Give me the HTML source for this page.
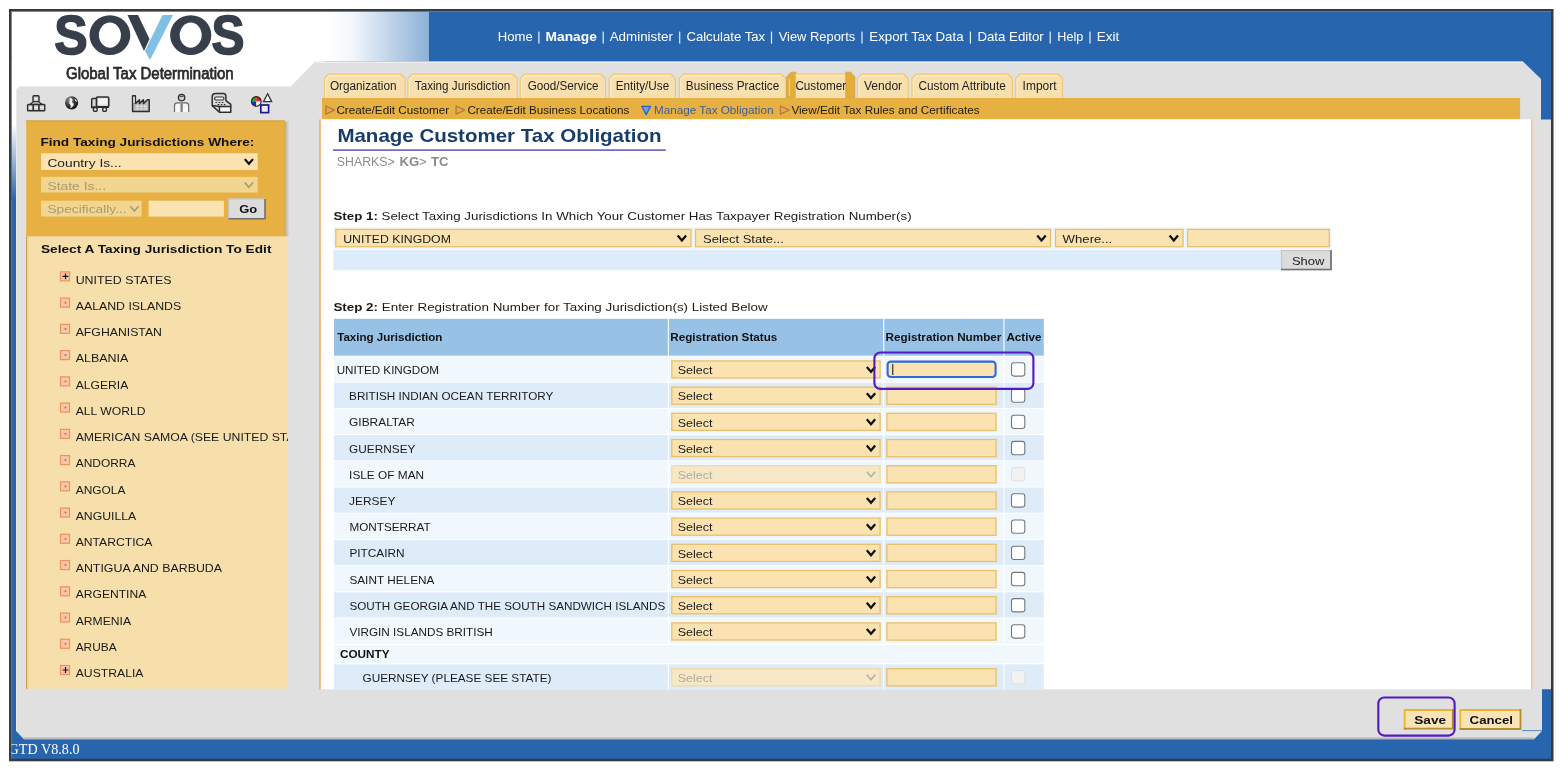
<!DOCTYPE html>
<html><head><meta charset="utf-8"><title>GTD</title><style>html,body{margin:0;padding:0;background:#fff;width:1562px;height:770px;overflow:hidden}svg{display:block;will-change:transform}</style></head><body><svg width="1562" height="770" viewBox="0 0 1562 770"><rect x="0.00" y="0.00" width="1562.00" height="770.00" fill="#ffffff" />
<rect x="11.50" y="11.50" width="1540.00" height="748.00" fill="#2766ae" />
<defs><linearGradient id="hg" x1="0" x2="1" y1="0" y2="0"><stop offset="0" stop-color="#ffffff"/><stop offset="0.25" stop-color="#f4f8fc"/><stop offset="1" stop-color="#8db1d7"/></linearGradient><linearGradient id="vg" x1="0" x2="0" y1="0" y2="1"><stop offset="0" stop-color="#ffffff"/><stop offset="0.45" stop-color="#ffffff"/><stop offset="1" stop-color="#2766ae"/></linearGradient></defs>
<rect x="11.50" y="11.50" width="313.50" height="78.50" fill="#ffffff" />
<rect x="324.00" y="11.50" width="105.00" height="50.00" fill="url(#hg)" />
<rect x="11.50" y="61.00" width="5.00" height="139.00" fill="url(#vg)" />
<path d="M16,92 Q16,86 22,86 L291,86 L315,61.5 L1523,61.5 L1541,79 L1541,119.6 L1551.5,119.6 L1551.5,689.3 L1542,689.3 L1542,731 L1534,739.3 L24,739.3 L16,731 Z" fill="#e0e0e0"/>
<path d="M16.5,731 L16.5,92 Q16.5,86.5 22,86.5 L291,86.5 L315,62" fill="none" stroke="#ececec" stroke-width="1"/>
<path d="M315,62.2 L1523,62.2" stroke="#f2f2f2" stroke-width="1"/>
<defs><linearGradient id="bsh" x1="0" x2="0" y1="0" y2="1"><stop offset="0" stop-color="#e0e0e0"/><stop offset="1" stop-color="#a8a8a8"/></linearGradient></defs>
<path d="M22,736.4 L1536.6,736.4 L1534,739.3 L24,739.3 Z" fill="url(#bsh)"/>
<path d="M1522,730.6 L1542,730.6" stroke="#5a8cc8" stroke-width="1"/>
<rect x="10.25" y="10.25" width="1542" height="749.8" fill="none" stroke="#363b40" stroke-width="2.5"/>
<text x="54.2" y="54.4" font-size="55" font-weight="bold" fill="#363f4a" stroke="#363f4a" stroke-width="1.6" font-family='"Liberation Sans", sans-serif' textLength="33.4" lengthAdjust="spacingAndGlyphs">S</text>
<text x="211.4" y="54.4" font-size="55" font-weight="bold" fill="#363f4a" stroke="#363f4a" stroke-width="1.6" font-family='"Liberation Sans", sans-serif' textLength="33" lengthAdjust="spacingAndGlyphs">S</text>
<path fill-rule="evenodd" fill="#363f4a" d="M89.5,35.1 a20.4,19.9 0 1 0 40.8,0 a20.4,19.9 0 1 0 -40.8,0 Z M98.9,35.1 a11.0,12.6 0 1 0 22.0,0 a11.0,12.6 0 1 0 -22.0,0 Z"/>
<path fill-rule="evenodd" fill="#363f4a" d="M170.1,35.1 a20.6,19.9 0 1 0 41.2,0 a20.6,19.9 0 1 0 -41.2,0 Z M179.7,35.1 a11.0,12.6 0 1 0 22.0,0 a11.0,12.6 0 1 0 -22.0,0 Z"/>
<path d="M127.5,15 L138,15 L149.5,39 L144,51 Z" fill="#363f4a"/>
<path d="M162.5,15 L173,15 L150,60 L145,51 Z" fill="#7fc1e3"/>
<text x="66.00" y="78.60" font-size="16.4" font-weight="normal" fill="#2a2a2a" font-family='"Liberation Sans", sans-serif' textLength="167.60" lengthAdjust="spacingAndGlyphs" stroke="#2a2a2a" stroke-width="0.75" xml:space="preserve">Global Tax Determination</text>
<text x="497.70" y="41.10" font-size="12.4" font-weight="normal" fill="#ffffff" font-family='"Liberation Sans", sans-serif' textLength="35.00" lengthAdjust="spacingAndGlyphs"  xml:space="preserve">Home</text>
<text x="545.60" y="41.10" font-size="12.4" font-weight="bold" fill="#ffffff" font-family='"Liberation Sans", sans-serif' textLength="51.20" lengthAdjust="spacingAndGlyphs"  xml:space="preserve">Manage</text>
<text x="609.70" y="41.10" font-size="12.4" font-weight="normal" fill="#ffffff" font-family='"Liberation Sans", sans-serif' textLength="63.20" lengthAdjust="spacingAndGlyphs"  xml:space="preserve">Administer</text>
<text x="686.40" y="41.10" font-size="12.4" font-weight="normal" fill="#ffffff" font-family='"Liberation Sans", sans-serif' textLength="78.70" lengthAdjust="spacingAndGlyphs"  xml:space="preserve">Calculate Tax</text>
<text x="778.70" y="41.10" font-size="12.4" font-weight="normal" fill="#ffffff" font-family='"Liberation Sans", sans-serif' textLength="76.50" lengthAdjust="spacingAndGlyphs"  xml:space="preserve">View Reports</text>
<text x="869.30" y="41.10" font-size="12.4" font-weight="normal" fill="#ffffff" font-family='"Liberation Sans", sans-serif' textLength="94.30" lengthAdjust="spacingAndGlyphs"  xml:space="preserve">Export Tax Data</text>
<text x="977.40" y="41.10" font-size="12.4" font-weight="normal" fill="#ffffff" font-family='"Liberation Sans", sans-serif' textLength="66.40" lengthAdjust="spacingAndGlyphs"  xml:space="preserve">Data Editor</text>
<text x="1057.30" y="41.10" font-size="12.4" font-weight="normal" fill="#ffffff" font-family='"Liberation Sans", sans-serif' textLength="25.90" lengthAdjust="spacingAndGlyphs"  xml:space="preserve">Help</text>
<text x="1096.70" y="41.10" font-size="12.4" font-weight="normal" fill="#ffffff" font-family='"Liberation Sans", sans-serif' textLength="22.60" lengthAdjust="spacingAndGlyphs"  xml:space="preserve">Exit</text>
<rect x="538.30" y="31.60" width="1.20" height="12.00" fill="#e8eef6" />
<rect x="602.60" y="31.60" width="1.20" height="12.00" fill="#e8eef6" />
<rect x="679.10" y="31.60" width="1.20" height="12.00" fill="#e8eef6" />
<rect x="770.90" y="31.60" width="1.20" height="12.00" fill="#e8eef6" />
<rect x="861.40" y="31.60" width="1.20" height="12.00" fill="#e8eef6" />
<rect x="969.80" y="31.60" width="1.20" height="12.00" fill="#e8eef6" />
<rect x="1049.60" y="31.60" width="1.20" height="12.00" fill="#e8eef6" />
<rect x="1089.40" y="31.60" width="1.20" height="12.00" fill="#e8eef6" />
<g stroke="#2e2e2e" stroke-width="1.4" fill="#cfcfcf"><rect x="33" y="95.8" width="6" height="5.8" rx="0.9"/><rect x="27.6" y="104.5" width="5.8" height="6.2" rx="0.8"/><rect x="33.3" y="104.5" width="5.8" height="6.2" rx="0.8"/><rect x="39" y="104.5" width="5.8" height="6.2" rx="0.8"/></g><path d="M33.5,101.8 L29.5,104.4 M38.5,101.8 L42.5,104.4 M29.5,104.4 L42.5,104.4" stroke="#2e2e2e" stroke-width="1.1" fill="none"/><path d="M34.4,98.9 h3.2 M29,107.7 h3 M34.7,107.7 h3 M40.4,107.7 h3" stroke="#f8f8f8" stroke-width="1.3"/>
<defs><radialGradient id="glb" cx="0.35" cy="0.3" r="0.75"><stop offset="0" stop-color="#9a9a9a"/><stop offset="0.5" stop-color="#3c3c3c"/><stop offset="1" stop-color="#111"/></radialGradient></defs><circle cx="71.6" cy="102.85" r="6.6" fill="url(#glb)"/><path d="M69.2,97.6 Q72.5,98.2 72.8,100.2 Q71,101.2 72.5,102.8 Q74.5,103.6 73.6,105.6 Q72,107.6 70.4,108.6 Q71.2,106 70.2,104.6 Q68.4,103.4 69.6,101.6 Q70.6,100.2 69.2,97.6 Z" fill="#f0f0f0"/><path d="M74.6,98.6 Q76.8,100 77.4,102 Q76,101.6 75,100.2 Z" fill="#dcdcdc"/>
<g stroke="#2e2e2e" stroke-width="1.5" fill="#d6d6d6"><rect x="96.4" y="96.9" width="12.4" height="9.9" rx="1.2"/><path d="M91.7,107.6 L91.7,99.6 Q91.7,98.6 92.7,98.6 L96.4,98.6 L96.4,107.6 Z"/></g><rect x="98.2" y="98.6" width="9" height="6.2" fill="#f4f4f4"/><path d="M91.5,107.2 L109,107.2" stroke="#2e2e2e" stroke-width="1.6"/><g stroke="#2e2e2e" stroke-width="1.4" fill="#fafafa"><circle cx="95.3" cy="109.4" r="1.9"/><circle cx="104.6" cy="109.4" r="1.9"/></g>
<path d="M132.6,111.6 L132.6,95.8 L135.4,95.8 L135.4,103.6 L139.4,99.8 L139.4,103.6 L143.4,99.8 L143.4,103.6 L147.4,99.8 L149.2,99.8 L149.2,111.6 Z" fill="#bcbcbc" stroke="#2e2e2e" stroke-width="1.5" stroke-linejoin="round"/><rect x="133.4" y="96.8" width="1.3" height="6" fill="#f0f0f0"/><path d="M136.4,106.2 h2.2 M140.4,106.2 h2.2 M144.4,106.2 h2.2 M136.4,108.9 h2.2 M140.4,108.9 h2.2 M144.4,108.9 h2.2" stroke="#f4f4f4" stroke-width="1.4"/>
<circle cx="181.6" cy="97.6" r="3.2" fill="#d0d0d0" stroke="#2e2e2e" stroke-width="1.3"/><path d="M178.6,97 Q181.6,93.8 184.6,97 Z" fill="#555"/><path d="M174.5,111.9 L174.5,105.6 Q174.5,102.8 177.4,102.8 L185.8,102.8 Q188.7,102.8 188.7,105.6 L188.7,111.9" fill="#f6f6f6" stroke="#6a6a6a" stroke-width="1.2"/><rect x="180.5" y="103.4" width="2.2" height="8.5" fill="#7a7a7a"/>
<g stroke="#2e2e2e" stroke-width="1.5" fill="#dadada" stroke-linejoin="round"><path d="M212.2,97 Q212.2,93.6 215.6,93.6 L223.4,93.6 Q225.9,93.6 225.9,96.4 L225.9,100.6 L230.8,104.4 L230.8,112.3 L219.4,112.3 L212.2,105.6 Z"/><path d="M219.4,112.3 L219.4,106.6 L230.8,106.6" fill="none"/><path d="M212.2,105.6 L219.4,106.6" fill="none"/></g><rect x="220.6" y="107.8" width="9" height="3.4" fill="#fafafa"/><rect x="214.6" y="97" width="9.4" height="3" rx="1.5" fill="#f4f4f4" stroke="#2e2e2e" stroke-width="1.1"/><path d="M215.5,102.5 h1.6 M218.6,102.5 h1.6 M221.7,102.5 h1.6 M217.6,104.6 h1.6 M220.7,104.6 h1.6 M223.8,104.6 h1.6" stroke="#333" stroke-width="1.1"/>
<g><path d="M256.3,101.4 L256.3,96.60000000000001 A4.8,4.8 0 0 0 251.5,101.4 Z" fill="#1fa82a"/><path d="M256.3,101.4 L256.3,96.60000000000001 A4.8,4.8 0 0 1 261.1,101.4 Z" fill="#e02020"/><path d="M256.3,101.4 L251.5,101.4 A4.8,4.8 0 0 0 256.3,106.2 Z" fill="#1a2ad0"/><path d="M256.3,101.4 L261.1,101.4 A4.8,4.8 0 0 1 256.3,106.2 Z" fill="#f4f4f4"/><circle cx="256.3" cy="101.4" r="4.8" fill="none" stroke="#222" stroke-width="1.1"/><path d="M267.6,93.8 L271.7,101.6 L263.5,101.6 Z" fill="#f4f4f4" stroke="#333" stroke-width="1.3"/><rect x="260.8" y="105" width="7.8" height="7.6" fill="#eee" stroke="#1a1a8a" stroke-width="1.7"/></g>
<rect x="26.20" y="120.50" width="258.80" height="116.10" fill="#e6b142" />
<rect x="26.20" y="120.50" width="258.80" height="0.80" fill="#cf9d3a" />
<defs><linearGradient id="gsh" x1="0" x2="1" y1="0" y2="0"><stop offset="0" stop-color="#b8b0a0"/><stop offset="1" stop-color="#e0e0e0"/></linearGradient></defs>
<rect x="285.00" y="121.50" width="4.50" height="115.10" fill="url(#gsh)" />
<rect x="284.30" y="121.00" width="0.90" height="115.60" fill="#dcaa48" />
<text x="40.40" y="146.00" font-size="11.8" font-weight="bold" fill="#111" font-family='"Liberation Sans", sans-serif' textLength="214.00" lengthAdjust="spacingAndGlyphs"  xml:space="preserve">Find Taxing Jurisdictions Where:</text>
<rect x="41.00" y="153.20" width="216.70" height="16.70" fill="#fae3b0" />
<text x="47.40" y="166.60" font-size="11.8" font-weight="normal" fill="#222" font-family='"Liberation Sans", sans-serif' textLength="74.20" lengthAdjust="spacingAndGlyphs"  xml:space="preserve">Country Is...</text>
<path d="M244.80,159.10 L248.90,163.80 L253.00,159.10" fill="none" stroke="#111" stroke-width="2.2" stroke-linecap="butt"/>
<rect x="41.00" y="176.90" width="216.70" height="15.60" fill="#f2d590" />
<text x="47.40" y="189.70" font-size="11.8" font-weight="normal" fill="#a89a72" font-family='"Liberation Sans", sans-serif' textLength="58.70" lengthAdjust="spacingAndGlyphs"  xml:space="preserve">State Is...</text>
<path d="M244.80,182.60 L248.90,187.30 L253.00,182.60" fill="none" stroke="#a89a72" stroke-width="1.6" stroke-linecap="butt"/>
<rect x="41.00" y="200.70" width="100.60" height="15.90" fill="#f2d590" />
<text x="47.40" y="213.00" font-size="11.8" font-weight="normal" fill="#a89a72" font-family='"Liberation Sans", sans-serif' textLength="79.20" lengthAdjust="spacingAndGlyphs"  xml:space="preserve">Specifically...</text>
<path d="M130.30,206.30 L134.40,211.00 L138.50,206.30" fill="none" stroke="#a89a72" stroke-width="1.6" stroke-linecap="butt"/>
<rect x="148.60" y="200.70" width="75.30" height="15.90" fill="#fae3b0" />
<rect x="228.60" y="198.90" width="36.40" height="19.80" fill="#dcdcdc" />
<path d="M228.6,218.7 L228.6,198.9 L265,198.9" fill="none" stroke="#c4c4c4" stroke-width="1.4"/>
<path d="M265,198.9 L265,218.7 L228.6,218.7" fill="none" stroke="#707070" stroke-width="1.6"/>
<text x="239.20" y="213.20" font-size="11.8" font-weight="bold" fill="#111" font-family='"Liberation Sans", sans-serif' textLength="18.00" lengthAdjust="spacingAndGlyphs"  xml:space="preserve">Go</text>
<rect x="26.00" y="236.60" width="262.10" height="452.20" fill="#f6dfab" />
<rect x="26.00" y="236.60" width="1.20" height="452.20" fill="#c9a256" />
<rect x="27.20" y="236.60" width="1.40" height="452.20" fill="#ead08e" />
<text x="40.90" y="252.70" font-size="11.8" font-weight="bold" fill="#111" font-family='"Liberation Sans", sans-serif' textLength="230.60" lengthAdjust="spacingAndGlyphs"  xml:space="preserve">Select A Taxing Jurisdiction To Edit</text>
<clipPath id="listclip"><rect x="26" y="236" width="262.1" height="453"/></clipPath>
<g clip-path="url(#listclip)">
<rect x="60.5" y="271.90" width="9" height="9" fill="#f8c8a4" stroke="#f09060" stroke-width="1.2"/>
<path d="M62.6,276.40 h5.8 M65.5,273.50 v5.8" stroke="#111" stroke-width="1.2"/>
<text x="75.70" y="283.60" font-size="11.8" font-weight="normal" fill="#1a1a1a" font-family='"Liberation Sans", sans-serif' textLength="95.80" lengthAdjust="spacingAndGlyphs"  xml:space="preserve">UNITED STATES</text>
<rect x="60.5" y="298.14" width="9" height="9" fill="#f8c8a4" stroke="#f09060" stroke-width="1.2"/>
<rect x="64.6" y="301.74" width="1.8" height="1.8" fill="#c07050"/>
<text x="75.70" y="309.84" font-size="11.8" font-weight="normal" fill="#1a1a1a" font-family='"Liberation Sans", sans-serif' textLength="105.50" lengthAdjust="spacingAndGlyphs"  xml:space="preserve">AALAND ISLANDS</text>
<rect x="60.5" y="324.38" width="9" height="9" fill="#f8c8a4" stroke="#f09060" stroke-width="1.2"/>
<rect x="64.6" y="327.98" width="1.8" height="1.8" fill="#c07050"/>
<text x="75.70" y="336.08" font-size="11.8" font-weight="normal" fill="#1a1a1a" font-family='"Liberation Sans", sans-serif' textLength="86.30" lengthAdjust="spacingAndGlyphs"  xml:space="preserve">AFGHANISTAN</text>
<rect x="60.5" y="350.62" width="9" height="9" fill="#f8c8a4" stroke="#f09060" stroke-width="1.2"/>
<rect x="64.6" y="354.22" width="1.8" height="1.8" fill="#c07050"/>
<text x="75.70" y="362.32" font-size="11.8" font-weight="normal" fill="#1a1a1a" font-family='"Liberation Sans", sans-serif' textLength="52.60" lengthAdjust="spacingAndGlyphs"  xml:space="preserve">ALBANIA</text>
<rect x="60.5" y="376.86" width="9" height="9" fill="#f8c8a4" stroke="#f09060" stroke-width="1.2"/>
<rect x="64.6" y="380.46" width="1.8" height="1.8" fill="#c07050"/>
<text x="75.70" y="388.56" font-size="11.8" font-weight="normal" fill="#1a1a1a" font-family='"Liberation Sans", sans-serif' textLength="52.60" lengthAdjust="spacingAndGlyphs"  xml:space="preserve">ALGERIA</text>
<rect x="60.5" y="403.10" width="9" height="9" fill="#f8c8a4" stroke="#f09060" stroke-width="1.2"/>
<rect x="64.6" y="406.70" width="1.8" height="1.8" fill="#c07050"/>
<text x="75.70" y="414.80" font-size="11.8" font-weight="normal" fill="#1a1a1a" font-family='"Liberation Sans", sans-serif' textLength="69.80" lengthAdjust="spacingAndGlyphs"  xml:space="preserve">ALL WORLD</text>
<rect x="60.5" y="429.34" width="9" height="9" fill="#f8c8a4" stroke="#f09060" stroke-width="1.2"/>
<rect x="64.6" y="432.94" width="1.8" height="1.8" fill="#c07050"/>
<text x="75.70" y="441.04" font-size="11.8" font-weight="normal" fill="#1a1a1a" font-family='"Liberation Sans", sans-serif' textLength="245.90" lengthAdjust="spacingAndGlyphs"  xml:space="preserve">AMERICAN SAMOA (SEE UNITED STATES)</text>
<rect x="60.5" y="455.58" width="9" height="9" fill="#f8c8a4" stroke="#f09060" stroke-width="1.2"/>
<rect x="64.6" y="459.18" width="1.8" height="1.8" fill="#c07050"/>
<text x="75.70" y="467.28" font-size="11.8" font-weight="normal" fill="#1a1a1a" font-family='"Liberation Sans", sans-serif' textLength="59.70" lengthAdjust="spacingAndGlyphs"  xml:space="preserve">ANDORRA</text>
<rect x="60.5" y="481.82" width="9" height="9" fill="#f8c8a4" stroke="#f09060" stroke-width="1.2"/>
<rect x="64.6" y="485.42" width="1.8" height="1.8" fill="#c07050"/>
<text x="75.70" y="493.52" font-size="11.8" font-weight="normal" fill="#1a1a1a" font-family='"Liberation Sans", sans-serif' textLength="49.70" lengthAdjust="spacingAndGlyphs"  xml:space="preserve">ANGOLA</text>
<rect x="60.5" y="508.06" width="9" height="9" fill="#f8c8a4" stroke="#f09060" stroke-width="1.2"/>
<rect x="64.6" y="511.66" width="1.8" height="1.8" fill="#c07050"/>
<text x="75.70" y="519.76" font-size="11.8" font-weight="normal" fill="#1a1a1a" font-family='"Liberation Sans", sans-serif' textLength="60.60" lengthAdjust="spacingAndGlyphs"  xml:space="preserve">ANGUILLA</text>
<rect x="60.5" y="534.30" width="9" height="9" fill="#f8c8a4" stroke="#f09060" stroke-width="1.2"/>
<rect x="64.6" y="537.90" width="1.8" height="1.8" fill="#c07050"/>
<text x="75.70" y="546.00" font-size="11.8" font-weight="normal" fill="#1a1a1a" font-family='"Liberation Sans", sans-serif' textLength="76.80" lengthAdjust="spacingAndGlyphs"  xml:space="preserve">ANTARCTICA</text>
<rect x="60.5" y="560.54" width="9" height="9" fill="#f8c8a4" stroke="#f09060" stroke-width="1.2"/>
<rect x="64.6" y="564.14" width="1.8" height="1.8" fill="#c07050"/>
<text x="75.70" y="572.24" font-size="11.8" font-weight="normal" fill="#1a1a1a" font-family='"Liberation Sans", sans-serif' textLength="146.30" lengthAdjust="spacingAndGlyphs"  xml:space="preserve">ANTIGUA AND BARBUDA</text>
<rect x="60.5" y="586.78" width="9" height="9" fill="#f8c8a4" stroke="#f09060" stroke-width="1.2"/>
<rect x="64.6" y="590.38" width="1.8" height="1.8" fill="#c07050"/>
<text x="75.70" y="598.48" font-size="11.8" font-weight="normal" fill="#1a1a1a" font-family='"Liberation Sans", sans-serif' textLength="70.60" lengthAdjust="spacingAndGlyphs"  xml:space="preserve">ARGENTINA</text>
<rect x="60.5" y="613.02" width="9" height="9" fill="#f8c8a4" stroke="#f09060" stroke-width="1.2"/>
<rect x="64.6" y="616.62" width="1.8" height="1.8" fill="#c07050"/>
<text x="75.70" y="624.72" font-size="11.8" font-weight="normal" fill="#1a1a1a" font-family='"Liberation Sans", sans-serif' textLength="55.30" lengthAdjust="spacingAndGlyphs"  xml:space="preserve">ARMENIA</text>
<rect x="60.5" y="639.26" width="9" height="9" fill="#f8c8a4" stroke="#f09060" stroke-width="1.2"/>
<rect x="64.6" y="642.86" width="1.8" height="1.8" fill="#c07050"/>
<text x="75.70" y="650.96" font-size="11.8" font-weight="normal" fill="#1a1a1a" font-family='"Liberation Sans", sans-serif' textLength="41.00" lengthAdjust="spacingAndGlyphs"  xml:space="preserve">ARUBA</text>
<rect x="60.5" y="665.50" width="9" height="9" fill="#f8c8a4" stroke="#f09060" stroke-width="1.2"/>
<path d="M62.6,670.00 h5.8 M65.5,667.10 v5.8" stroke="#111" stroke-width="1.2"/>
<text x="75.70" y="677.20" font-size="11.8" font-weight="normal" fill="#1a1a1a" font-family='"Liberation Sans", sans-serif' textLength="67.80" lengthAdjust="spacingAndGlyphs"  xml:space="preserve">AUSTRALIA</text>
</g>
<path d="M324.3,98.5 L324.3,78.5 L328.8,74.1 L400.5,74.1 L405.0,78.5 L405.0,98.5 Z" fill="#f7e0ae" stroke="#efc772" stroke-width="1.1"/>
<path d="M325.8,97 L325.8,79 L329.40000000000003,75.6 L399.9,75.6" fill="none" stroke="#fbeccc" stroke-width="1.1"/>
<text x="330.00" y="90.20" font-size="12" font-weight="normal" fill="#1e1e1e" font-family='"Liberation Sans", sans-serif' textLength="66.50" lengthAdjust="spacingAndGlyphs"  xml:space="preserve">Organization</text>
<path d="M407.9,98.5 L407.9,78.5 L412.4,74.1 L512.8,74.1 L517.3,78.5 L517.3,98.5 Z" fill="#f7e0ae" stroke="#efc772" stroke-width="1.1"/>
<path d="M409.4,97 L409.4,79 L413.0,75.6 L512.1999999999999,75.6" fill="none" stroke="#fbeccc" stroke-width="1.1"/>
<text x="414.80" y="90.20" font-size="12" font-weight="normal" fill="#1e1e1e" font-family='"Liberation Sans", sans-serif' textLength="95.50" lengthAdjust="spacingAndGlyphs"  xml:space="preserve">Taxing Jurisdiction</text>
<path d="M520.2,98.5 L520.2,78.5 L524.7,74.1 L601,74.1 L605.5,78.5 L605.5,98.5 Z" fill="#f7e0ae" stroke="#efc772" stroke-width="1.1"/>
<path d="M521.7,97 L521.7,79 L525.3000000000001,75.6 L600.4,75.6" fill="none" stroke="#fbeccc" stroke-width="1.1"/>
<text x="527.80" y="90.20" font-size="12" font-weight="normal" fill="#1e1e1e" font-family='"Liberation Sans", sans-serif' textLength="70.70" lengthAdjust="spacingAndGlyphs"  xml:space="preserve">Good/Service</text>
<path d="M609.1,98.5 L609.1,78.5 L613.6,74.1 L670.9,74.1 L675.4,78.5 L675.4,98.5 Z" fill="#f7e0ae" stroke="#efc772" stroke-width="1.1"/>
<path d="M610.6,97 L610.6,79 L614.2,75.6 L670.3,75.6" fill="none" stroke="#fbeccc" stroke-width="1.1"/>
<text x="615.70" y="90.20" font-size="12" font-weight="normal" fill="#1e1e1e" font-family='"Liberation Sans", sans-serif' textLength="53.50" lengthAdjust="spacingAndGlyphs"  xml:space="preserve">Entity/Use</text>
<path d="M679.2,98.5 L679.2,78.5 L683.7,74.1 L781.3,74.1 L785.8,78.5 L785.8,98.5 Z" fill="#f7e0ae" stroke="#efc772" stroke-width="1.1"/>
<path d="M680.7,97 L680.7,79 L684.3000000000001,75.6 L780.6999999999999,75.6" fill="none" stroke="#fbeccc" stroke-width="1.1"/>
<text x="685.80" y="90.20" font-size="12" font-weight="normal" fill="#1e1e1e" font-family='"Liberation Sans", sans-serif' textLength="93.40" lengthAdjust="spacingAndGlyphs"  xml:space="preserve">Business Practice</text>
<path d="M786.5,98 L786.5,77 L791.0,72.2 L796.0,72.2 L796.0,98 Z" fill="#e3ad3c" stroke="#dba038" stroke-width="0.8"/>
<rect x="795.7" y="73.6" width="49.90" height="24.6" fill="#f7e0ae"/>
<path d="M795.7,74.1 L845.5999999999999,74.1" stroke="#efc772" stroke-width="1"/>
<path d="M795.7,75.5 L845.5999999999999,75.5" stroke="#fbecc8" stroke-width="1.2"/>
<path d="M845.8,98 L845.8,72.2 L850.8,72.2 L854.8,77 L854.8,98 Z" fill="#e3ad3c" stroke="#dba038" stroke-width="0.8"/>
<path d="M789.5,96 L789.5,79" stroke="#f0cc80" stroke-width="1.2"/>
<text x="795.40" y="90.20" font-size="12" font-weight="normal" fill="#1e1e1e" font-family='"Liberation Sans", sans-serif' textLength="50.80" lengthAdjust="spacingAndGlyphs"  xml:space="preserve">Customer</text>
<path d="M857.4,98.5 L857.4,78.5 L861.9,74.1 L903.7,74.1 L908.2,78.5 L908.2,98.5 Z" fill="#f7e0ae" stroke="#efc772" stroke-width="1.1"/>
<path d="M858.9,97 L858.9,79 L862.5,75.6 L903.1,75.6" fill="none" stroke="#fbeccc" stroke-width="1.1"/>
<text x="864.00" y="90.20" font-size="12" font-weight="normal" fill="#1e1e1e" font-family='"Liberation Sans", sans-serif' textLength="38.10" lengthAdjust="spacingAndGlyphs"  xml:space="preserve">Vendor</text>
<path d="M912.0,98.5 L912.0,78.5 L916.5,74.1 L1007.9,74.1 L1012.4,78.5 L1012.4,98.5 Z" fill="#f7e0ae" stroke="#efc772" stroke-width="1.1"/>
<path d="M913.5,97 L913.5,79 L917.1,75.6 L1007.3,75.6" fill="none" stroke="#fbeccc" stroke-width="1.1"/>
<text x="918.50" y="90.20" font-size="12" font-weight="normal" fill="#1e1e1e" font-family='"Liberation Sans", sans-serif' textLength="87.30" lengthAdjust="spacingAndGlyphs"  xml:space="preserve">Custom Attribute</text>
<path d="M1015.7,98.5 L1015.7,78.5 L1020.2,74.1 L1058,74.1 L1062.5,78.5 L1062.5,98.5 Z" fill="#f7e0ae" stroke="#efc772" stroke-width="1.1"/>
<path d="M1017.2,97 L1017.2,79 L1020.8000000000001,75.6 L1057.4,75.6" fill="none" stroke="#fbeccc" stroke-width="1.1"/>
<text x="1022.60" y="90.20" font-size="12" font-weight="normal" fill="#1e1e1e" font-family='"Liberation Sans", sans-serif' textLength="33.90" lengthAdjust="spacingAndGlyphs"  xml:space="preserve">Import</text>
<rect x="322.00" y="98.00" width="1198.10" height="21.30" fill="#e6b142" />
<path d="M325.90,106.00 L334.50,110.10 L325.90,114.20 Z" fill="#e8a860" stroke="#b87830" stroke-width="1.3" stroke-linejoin="round"/>
<text x="336.40" y="114.20" font-size="11.8" font-weight="normal" fill="#1e1a10" font-family='"Liberation Sans", sans-serif' textLength="112.80" lengthAdjust="spacingAndGlyphs"  xml:space="preserve">Create/Edit Customer</text>
<path d="M456.10,106.00 L464.70,110.10 L456.10,114.20 Z" fill="#e8a860" stroke="#b87830" stroke-width="1.3" stroke-linejoin="round"/>
<text x="467.40" y="114.20" font-size="11.8" font-weight="normal" fill="#1e1a10" font-family='"Liberation Sans", sans-serif' textLength="162.00" lengthAdjust="spacingAndGlyphs"  xml:space="preserve">Create/Edit Business Locations</text>
<path d="M641.7,106.3 L650.6,106.3 L646.15,114.6 Z" fill="#6f9be8" stroke="#2f5fc8" stroke-width="1.3" stroke-linejoin="round"/>
<text x="654.10" y="114.20" font-size="11.8" font-weight="normal" fill="#3c5c9a" font-family='"Liberation Sans", sans-serif' textLength="119.30" lengthAdjust="spacingAndGlyphs"  xml:space="preserve">Manage Tax Obligation</text>
<path d="M780.50,106.00 L789.10,110.10 L780.50,114.20 Z" fill="#e8a860" stroke="#b87830" stroke-width="1.3" stroke-linejoin="round"/>
<text x="791.40" y="114.20" font-size="11.8" font-weight="normal" fill="#1e1a10" font-family='"Liberation Sans", sans-serif' textLength="188.20" lengthAdjust="spacingAndGlyphs"  xml:space="preserve">View/Edit Tax Rules and Certificates</text>
<rect x="319.20" y="119.30" width="1213.40" height="570.00" fill="#ffffff" />
<rect x="319.20" y="119.30" width="1.50" height="570.00" fill="#efa45c" />
<rect x="1531.20" y="119.30" width="1.40" height="570.00" fill="#eeb888" />
<text x="337.40" y="142.30" font-size="18.6" font-weight="bold" fill="#173d6b" font-family='"Liberation Sans", sans-serif' textLength="324.20" lengthAdjust="spacingAndGlyphs"  xml:space="preserve">Manage Customer Tax Obligation</text>
<rect x="333.00" y="149.40" width="332.80" height="1.40" fill="#5048ae" />
<text x="336.80" y="165.50" font-size="12.6" font-weight="normal" fill="#8a8a8a" font-family='"Liberation Sans", sans-serif' textLength="58.00" lengthAdjust="spacingAndGlyphs"  xml:space="preserve">SHARKS&gt;</text>
<text x="399.40" y="165.50" font-size="12.6" font-weight="normal" fill="#8a8a8a" font-family='"Liberation Sans", sans-serif' textLength="27.40" lengthAdjust="spacingAndGlyphs"  xml:space="preserve"><tspan font-weight="bold">KG</tspan><tspan font-weight="normal">&gt;</tspan></text>
<text x="431.10" y="165.50" font-size="12.6" font-weight="bold" fill="#8a8a8a" font-family='"Liberation Sans", sans-serif' textLength="17.50" lengthAdjust="spacingAndGlyphs"  xml:space="preserve">TC</text>
<text x="333.40" y="219.90" font-size="11.8" font-weight="normal" fill="#1a1a1a" font-family='"Liberation Sans", sans-serif' textLength="578.20" lengthAdjust="spacingAndGlyphs"  xml:space="preserve"><tspan font-weight="bold">Step 1:</tspan><tspan font-weight="normal"> Select Taxing Jurisdictions In Which Your Customer Has Taxpayer Registration Number(s)</tspan></text>
<rect x="333.30" y="227.50" width="998.10" height="21.90" fill="#eef5fc" />
<rect x="335.80" y="229.40" width="355.20" height="17.30" fill="#fae3b0" stroke="#e9c06a" stroke-width="1.3"/>
<text x="343.20" y="242.70" font-size="11.8" font-weight="normal" fill="#1a1a1a" font-family='"Liberation Sans", sans-serif' textLength="107.70" lengthAdjust="spacingAndGlyphs"  xml:space="preserve">UNITED KINGDOM</text>
<path d="M677.70,235.55 L681.90,240.45 L686.10,235.55" fill="none" stroke="#111" stroke-width="2.3" stroke-linecap="butt"/>
<rect x="695.50" y="229.40" width="355.00" height="17.30" fill="#fae3b0" stroke="#e9c06a" stroke-width="1.3"/>
<text x="703.10" y="242.70" font-size="11.8" font-weight="normal" fill="#1a1a1a" font-family='"Liberation Sans", sans-serif' textLength="80.70" lengthAdjust="spacingAndGlyphs"  xml:space="preserve">Select State...</text>
<path d="M1037.30,235.55 L1041.50,240.45 L1045.70,235.55" fill="none" stroke="#111" stroke-width="2.3" stroke-linecap="butt"/>
<rect x="1055.50" y="229.40" width="127.50" height="17.30" fill="#fae3b0" stroke="#e9c06a" stroke-width="1.3"/>
<text x="1062.60" y="242.70" font-size="11.8" font-weight="normal" fill="#1a1a1a" font-family='"Liberation Sans", sans-serif' textLength="49.70" lengthAdjust="spacingAndGlyphs"  xml:space="preserve">Where...</text>
<path d="M1169.60,235.55 L1173.80,240.45 L1178.00,235.55" fill="none" stroke="#111" stroke-width="2.3" stroke-linecap="butt"/>
<rect x="1187.6" y="229.4" width="141.7" height="17.3" fill="#fae3b0" stroke="#e9c06a" stroke-width="1.3"/>
<rect x="333.30" y="250.00" width="998.10" height="20.20" fill="#ddebfa" />
<rect x="1281.00" y="250.00" width="50.80" height="20.30" fill="#dcdcdc" />
<path d="M1281.6,270.3 L1281.6,250.6 L1331.8,250.6" fill="none" stroke="#c6c6c6" stroke-width="1.3"/>
<path d="M1331,250.2 L1331,269.5 L1281,269.5" fill="none" stroke="#6e6e6e" stroke-width="1.7"/>
<text x="1292.00" y="265.30" font-size="11.8" font-weight="normal" fill="#1a1a1a" font-family='"Liberation Sans", sans-serif' textLength="32.30" lengthAdjust="spacingAndGlyphs"  xml:space="preserve">Show</text>
<text x="333.40" y="311.00" font-size="11.8" font-weight="normal" fill="#1a1a1a" font-family='"Liberation Sans", sans-serif' textLength="434.30" lengthAdjust="spacingAndGlyphs"  xml:space="preserve"><tspan font-weight="bold">Step 2:</tspan><tspan font-weight="normal"> Enter Registration Number for Taxing Jurisdiction(s) Listed Below</tspan></text>
<rect x="334.00" y="318.80" width="333.80" height="36.90" fill="#97c2e6" />
<rect x="668.90" y="318.80" width="214.30" height="36.90" fill="#97c2e6" />
<rect x="884.30" y="318.80" width="119.10" height="36.90" fill="#97c2e6" />
<rect x="1004.50" y="318.80" width="39.30" height="36.90" fill="#97c2e6" />
<text x="337.20" y="341.30" font-size="11.5" font-weight="bold" fill="#111" font-family='"Liberation Sans", sans-serif' textLength="105.20" lengthAdjust="spacingAndGlyphs"  xml:space="preserve">Taxing Jurisdiction</text>
<text x="670.30" y="341.30" font-size="11.5" font-weight="bold" fill="#111" font-family='"Liberation Sans", sans-serif' textLength="107.00" lengthAdjust="spacingAndGlyphs"  xml:space="preserve">Registration Status</text>
<text x="885.60" y="341.30" font-size="11.5" font-weight="bold" fill="#111" font-family='"Liberation Sans", sans-serif' textLength="115.80" lengthAdjust="spacingAndGlyphs"  xml:space="preserve">Registration Number</text>
<text x="1006.40" y="341.30" font-size="11.5" font-weight="bold" fill="#111" font-family='"Liberation Sans", sans-serif' textLength="35.00" lengthAdjust="spacingAndGlyphs"  xml:space="preserve">Active</text>
<clipPath id="tclip"><rect x="320" y="119" width="1212" height="570.3"/></clipPath>
<g clip-path="url(#tclip)">
<rect x="334.00" y="356.50" width="333.80" height="25.20" fill="#f0f7fd" />
<rect x="668.90" y="356.50" width="214.30" height="25.20" fill="#f0f7fd" />
<rect x="884.30" y="356.50" width="119.10" height="25.20" fill="#f0f7fd" />
<rect x="1004.50" y="356.50" width="39.30" height="25.20" fill="#f0f7fd" />
<text x="336.70" y="373.90" font-size="11.5" font-weight="normal" fill="#1a1a1a" font-family='"Liberation Sans", sans-serif' textLength="102.40" lengthAdjust="spacingAndGlyphs"  xml:space="preserve">UNITED KINGDOM</text>
<rect x="671.80" y="360.90" width="208.30" height="17.10" fill="#fae3b0" stroke="#e9c06a" stroke-width="1.3"/>
<text x="677.80" y="374.10" font-size="11.8" font-weight="normal" fill="#1a1a1a" font-family='"Liberation Sans", sans-serif' textLength="34.70" lengthAdjust="spacingAndGlyphs"  xml:space="preserve">Select</text>
<path d="M866.80,366.95 L871.00,371.85 L875.20,366.95" fill="none" stroke="#111" stroke-width="2.3" stroke-linecap="butt"/>
<rect x="1011.5" y="362.80" width="13.3" height="13.3" rx="2.5" fill="#ffffff" stroke="#777" stroke-width="1.1"/>
<rect x="334.00" y="382.70" width="333.80" height="25.20" fill="#deecfa" />
<rect x="668.90" y="382.70" width="214.30" height="25.20" fill="#deecfa" />
<rect x="884.30" y="382.70" width="119.10" height="25.20" fill="#deecfa" />
<rect x="1004.50" y="382.70" width="39.30" height="25.20" fill="#deecfa" />
<text x="349.10" y="400.10" font-size="11.5" font-weight="normal" fill="#1a1a1a" font-family='"Liberation Sans", sans-serif' textLength="204.30" lengthAdjust="spacingAndGlyphs"  xml:space="preserve">BRITISH INDIAN OCEAN TERRITORY</text>
<rect x="671.80" y="387.10" width="208.30" height="17.10" fill="#fae3b0" stroke="#e9c06a" stroke-width="1.3"/>
<text x="677.80" y="400.30" font-size="11.8" font-weight="normal" fill="#1a1a1a" font-family='"Liberation Sans", sans-serif' textLength="34.70" lengthAdjust="spacingAndGlyphs"  xml:space="preserve">Select</text>
<path d="M866.80,393.15 L871.00,398.05 L875.20,393.15" fill="none" stroke="#111" stroke-width="2.3" stroke-linecap="butt"/>
<rect x="886.9" y="387.10" width="109.2" height="17.2" fill="#fae3b0" stroke="#e9c06a" stroke-width="1.3"/>
<rect x="1011.5" y="389.00" width="13.3" height="13.3" rx="2.5" fill="#ffffff" stroke="#777" stroke-width="1.1"/>
<rect x="334.00" y="408.90" width="333.80" height="25.20" fill="#f0f7fd" />
<rect x="668.90" y="408.90" width="214.30" height="25.20" fill="#f0f7fd" />
<rect x="884.30" y="408.90" width="119.10" height="25.20" fill="#f0f7fd" />
<rect x="1004.50" y="408.90" width="39.30" height="25.20" fill="#f0f7fd" />
<text x="349.10" y="426.30" font-size="11.5" font-weight="normal" fill="#1a1a1a" font-family='"Liberation Sans", sans-serif' textLength="65.70" lengthAdjust="spacingAndGlyphs"  xml:space="preserve">GIBRALTAR</text>
<rect x="671.80" y="413.30" width="208.30" height="17.10" fill="#fae3b0" stroke="#e9c06a" stroke-width="1.3"/>
<text x="677.80" y="426.50" font-size="11.8" font-weight="normal" fill="#1a1a1a" font-family='"Liberation Sans", sans-serif' textLength="34.70" lengthAdjust="spacingAndGlyphs"  xml:space="preserve">Select</text>
<path d="M866.80,419.35 L871.00,424.25 L875.20,419.35" fill="none" stroke="#111" stroke-width="2.3" stroke-linecap="butt"/>
<rect x="886.9" y="413.30" width="109.2" height="17.2" fill="#fae3b0" stroke="#e9c06a" stroke-width="1.3"/>
<rect x="1011.5" y="415.20" width="13.3" height="13.3" rx="2.5" fill="#ffffff" stroke="#777" stroke-width="1.1"/>
<rect x="334.00" y="435.10" width="333.80" height="25.20" fill="#deecfa" />
<rect x="668.90" y="435.10" width="214.30" height="25.20" fill="#deecfa" />
<rect x="884.30" y="435.10" width="119.10" height="25.20" fill="#deecfa" />
<rect x="1004.50" y="435.10" width="39.30" height="25.20" fill="#deecfa" />
<text x="349.10" y="452.50" font-size="11.5" font-weight="normal" fill="#1a1a1a" font-family='"Liberation Sans", sans-serif' textLength="66.30" lengthAdjust="spacingAndGlyphs"  xml:space="preserve">GUERNSEY</text>
<rect x="671.80" y="439.50" width="208.30" height="17.10" fill="#fae3b0" stroke="#e9c06a" stroke-width="1.3"/>
<text x="677.80" y="452.70" font-size="11.8" font-weight="normal" fill="#1a1a1a" font-family='"Liberation Sans", sans-serif' textLength="34.70" lengthAdjust="spacingAndGlyphs"  xml:space="preserve">Select</text>
<path d="M866.80,445.55 L871.00,450.45 L875.20,445.55" fill="none" stroke="#111" stroke-width="2.3" stroke-linecap="butt"/>
<rect x="886.9" y="439.50" width="109.2" height="17.2" fill="#fae3b0" stroke="#e9c06a" stroke-width="1.3"/>
<rect x="1011.5" y="441.40" width="13.3" height="13.3" rx="2.5" fill="#ffffff" stroke="#777" stroke-width="1.1"/>
<rect x="334.00" y="461.30" width="333.80" height="25.20" fill="#f0f7fd" />
<rect x="668.90" y="461.30" width="214.30" height="25.20" fill="#f0f7fd" />
<rect x="884.30" y="461.30" width="119.10" height="25.20" fill="#f0f7fd" />
<rect x="1004.50" y="461.30" width="39.30" height="25.20" fill="#f0f7fd" />
<text x="349.10" y="478.70" font-size="11.5" font-weight="normal" fill="#1a1a1a" font-family='"Liberation Sans", sans-serif' textLength="75.00" lengthAdjust="spacingAndGlyphs"  xml:space="preserve">ISLE OF MAN</text>
<rect x="671.80" y="465.70" width="208.30" height="17.10" fill="#f6e7c6" stroke="#f0d9a6" stroke-width="1.3"/>
<text x="677.80" y="478.90" font-size="11.8" font-weight="normal" fill="#b4ac9c" font-family='"Liberation Sans", sans-serif' textLength="34.70" lengthAdjust="spacingAndGlyphs"  xml:space="preserve">Select</text>
<path d="M866.80,471.75 L871.00,476.65 L875.20,471.75" fill="none" stroke="#b8b0a0" stroke-width="1.6" stroke-linecap="butt"/>
<rect x="886.9" y="465.70" width="109.2" height="17.2" fill="#fae3b0" stroke="#e9c06a" stroke-width="1.3"/>
<rect x="1011.5" y="467.60" width="13.3" height="13.3" rx="2.5" fill="#f2f2f2" stroke="#dedede" stroke-width="1"/>
<rect x="334.00" y="487.50" width="333.80" height="25.20" fill="#deecfa" />
<rect x="668.90" y="487.50" width="214.30" height="25.20" fill="#deecfa" />
<rect x="884.30" y="487.50" width="119.10" height="25.20" fill="#deecfa" />
<rect x="1004.50" y="487.50" width="39.30" height="25.20" fill="#deecfa" />
<text x="349.10" y="504.90" font-size="11.5" font-weight="normal" fill="#1a1a1a" font-family='"Liberation Sans", sans-serif' textLength="46.40" lengthAdjust="spacingAndGlyphs"  xml:space="preserve">JERSEY</text>
<rect x="671.80" y="491.90" width="208.30" height="17.10" fill="#fae3b0" stroke="#e9c06a" stroke-width="1.3"/>
<text x="677.80" y="505.10" font-size="11.8" font-weight="normal" fill="#1a1a1a" font-family='"Liberation Sans", sans-serif' textLength="34.70" lengthAdjust="spacingAndGlyphs"  xml:space="preserve">Select</text>
<path d="M866.80,497.95 L871.00,502.85 L875.20,497.95" fill="none" stroke="#111" stroke-width="2.3" stroke-linecap="butt"/>
<rect x="886.9" y="491.90" width="109.2" height="17.2" fill="#fae3b0" stroke="#e9c06a" stroke-width="1.3"/>
<rect x="1011.5" y="493.80" width="13.3" height="13.3" rx="2.5" fill="#ffffff" stroke="#777" stroke-width="1.1"/>
<rect x="334.00" y="513.70" width="333.80" height="25.20" fill="#f0f7fd" />
<rect x="668.90" y="513.70" width="214.30" height="25.20" fill="#f0f7fd" />
<rect x="884.30" y="513.70" width="119.10" height="25.20" fill="#f0f7fd" />
<rect x="1004.50" y="513.70" width="39.30" height="25.20" fill="#f0f7fd" />
<text x="349.40" y="531.10" font-size="11.5" font-weight="normal" fill="#1a1a1a" font-family='"Liberation Sans", sans-serif' textLength="81.30" lengthAdjust="spacingAndGlyphs"  xml:space="preserve">MONTSERRAT</text>
<rect x="671.80" y="518.10" width="208.30" height="17.10" fill="#fae3b0" stroke="#e9c06a" stroke-width="1.3"/>
<text x="677.80" y="531.30" font-size="11.8" font-weight="normal" fill="#1a1a1a" font-family='"Liberation Sans", sans-serif' textLength="34.70" lengthAdjust="spacingAndGlyphs"  xml:space="preserve">Select</text>
<path d="M866.80,524.15 L871.00,529.05 L875.20,524.15" fill="none" stroke="#111" stroke-width="2.3" stroke-linecap="butt"/>
<rect x="886.9" y="518.10" width="109.2" height="17.2" fill="#fae3b0" stroke="#e9c06a" stroke-width="1.3"/>
<rect x="1011.5" y="520.00" width="13.3" height="13.3" rx="2.5" fill="#ffffff" stroke="#777" stroke-width="1.1"/>
<rect x="334.00" y="539.90" width="333.80" height="25.20" fill="#deecfa" />
<rect x="668.90" y="539.90" width="214.30" height="25.20" fill="#deecfa" />
<rect x="884.30" y="539.90" width="119.10" height="25.20" fill="#deecfa" />
<rect x="1004.50" y="539.90" width="39.30" height="25.20" fill="#deecfa" />
<text x="349.40" y="557.30" font-size="11.5" font-weight="normal" fill="#1a1a1a" font-family='"Liberation Sans", sans-serif' textLength="55.20" lengthAdjust="spacingAndGlyphs"  xml:space="preserve">PITCAIRN</text>
<rect x="671.80" y="544.30" width="208.30" height="17.10" fill="#fae3b0" stroke="#e9c06a" stroke-width="1.3"/>
<text x="677.80" y="557.50" font-size="11.8" font-weight="normal" fill="#1a1a1a" font-family='"Liberation Sans", sans-serif' textLength="34.70" lengthAdjust="spacingAndGlyphs"  xml:space="preserve">Select</text>
<path d="M866.80,550.35 L871.00,555.25 L875.20,550.35" fill="none" stroke="#111" stroke-width="2.3" stroke-linecap="butt"/>
<rect x="886.9" y="544.30" width="109.2" height="17.2" fill="#fae3b0" stroke="#e9c06a" stroke-width="1.3"/>
<rect x="1011.5" y="546.20" width="13.3" height="13.3" rx="2.5" fill="#ffffff" stroke="#777" stroke-width="1.1"/>
<rect x="334.00" y="566.10" width="333.80" height="25.20" fill="#f0f7fd" />
<rect x="668.90" y="566.10" width="214.30" height="25.20" fill="#f0f7fd" />
<rect x="884.30" y="566.10" width="119.10" height="25.20" fill="#f0f7fd" />
<rect x="1004.50" y="566.10" width="39.30" height="25.20" fill="#f0f7fd" />
<text x="349.40" y="583.50" font-size="11.5" font-weight="normal" fill="#1a1a1a" font-family='"Liberation Sans", sans-serif' textLength="85.00" lengthAdjust="spacingAndGlyphs"  xml:space="preserve">SAINT HELENA</text>
<rect x="671.80" y="570.50" width="208.30" height="17.10" fill="#fae3b0" stroke="#e9c06a" stroke-width="1.3"/>
<text x="677.80" y="583.70" font-size="11.8" font-weight="normal" fill="#1a1a1a" font-family='"Liberation Sans", sans-serif' textLength="34.70" lengthAdjust="spacingAndGlyphs"  xml:space="preserve">Select</text>
<path d="M866.80,576.55 L871.00,581.45 L875.20,576.55" fill="none" stroke="#111" stroke-width="2.3" stroke-linecap="butt"/>
<rect x="886.9" y="570.50" width="109.2" height="17.2" fill="#fae3b0" stroke="#e9c06a" stroke-width="1.3"/>
<rect x="1011.5" y="572.40" width="13.3" height="13.3" rx="2.5" fill="#ffffff" stroke="#777" stroke-width="1.1"/>
<rect x="334.00" y="592.30" width="333.80" height="25.20" fill="#deecfa" />
<rect x="668.90" y="592.30" width="214.30" height="25.20" fill="#deecfa" />
<rect x="884.30" y="592.30" width="119.10" height="25.20" fill="#deecfa" />
<rect x="1004.50" y="592.30" width="39.30" height="25.20" fill="#deecfa" />
<text x="349.40" y="609.70" font-size="11.5" font-weight="normal" fill="#1a1a1a" font-family='"Liberation Sans", sans-serif' textLength="315.80" lengthAdjust="spacingAndGlyphs"  xml:space="preserve">SOUTH GEORGIA AND THE SOUTH SANDWICH ISLANDS</text>
<rect x="671.80" y="596.70" width="208.30" height="17.10" fill="#fae3b0" stroke="#e9c06a" stroke-width="1.3"/>
<text x="677.80" y="609.90" font-size="11.8" font-weight="normal" fill="#1a1a1a" font-family='"Liberation Sans", sans-serif' textLength="34.70" lengthAdjust="spacingAndGlyphs"  xml:space="preserve">Select</text>
<path d="M866.80,602.75 L871.00,607.65 L875.20,602.75" fill="none" stroke="#111" stroke-width="2.3" stroke-linecap="butt"/>
<rect x="886.9" y="596.70" width="109.2" height="17.2" fill="#fae3b0" stroke="#e9c06a" stroke-width="1.3"/>
<rect x="1011.5" y="598.60" width="13.3" height="13.3" rx="2.5" fill="#ffffff" stroke="#777" stroke-width="1.1"/>
<rect x="334.00" y="618.50" width="333.80" height="25.20" fill="#f0f7fd" />
<rect x="668.90" y="618.50" width="214.30" height="25.20" fill="#f0f7fd" />
<rect x="884.30" y="618.50" width="119.10" height="25.20" fill="#f0f7fd" />
<rect x="1004.50" y="618.50" width="39.30" height="25.20" fill="#f0f7fd" />
<text x="349.40" y="635.90" font-size="11.5" font-weight="normal" fill="#1a1a1a" font-family='"Liberation Sans", sans-serif' textLength="143.40" lengthAdjust="spacingAndGlyphs"  xml:space="preserve">VIRGIN ISLANDS BRITISH</text>
<rect x="671.80" y="622.90" width="208.30" height="17.10" fill="#fae3b0" stroke="#e9c06a" stroke-width="1.3"/>
<text x="677.80" y="636.10" font-size="11.8" font-weight="normal" fill="#1a1a1a" font-family='"Liberation Sans", sans-serif' textLength="34.70" lengthAdjust="spacingAndGlyphs"  xml:space="preserve">Select</text>
<path d="M866.80,628.95 L871.00,633.85 L875.20,628.95" fill="none" stroke="#111" stroke-width="2.3" stroke-linecap="butt"/>
<rect x="886.9" y="622.90" width="109.2" height="17.2" fill="#fae3b0" stroke="#e9c06a" stroke-width="1.3"/>
<rect x="1011.5" y="624.80" width="13.3" height="13.3" rx="2.5" fill="#ffffff" stroke="#777" stroke-width="1.1"/>
<rect x="334.00" y="645.20" width="709.80" height="17.90" fill="#f0f7fd" />
<text x="340.00" y="658.40" font-size="11.5" font-weight="bold" fill="#111" font-family='"Liberation Sans", sans-serif' textLength="49.60" lengthAdjust="spacingAndGlyphs"  xml:space="preserve">COUNTY</text>
<rect x="334.00" y="664.30" width="333.80" height="25.20" fill="#deecfa" />
<rect x="668.90" y="664.30" width="214.30" height="25.20" fill="#deecfa" />
<rect x="884.30" y="664.30" width="119.10" height="25.20" fill="#deecfa" />
<rect x="1004.50" y="664.30" width="39.30" height="25.20" fill="#deecfa" />
<text x="362.60" y="681.50" font-size="11.5" font-weight="normal" fill="#1a1a1a" font-family='"Liberation Sans", sans-serif' textLength="188.80" lengthAdjust="spacingAndGlyphs"  xml:space="preserve">GUERNSEY (PLEASE SEE STATE)</text>
<rect x="671.80" y="668.70" width="208.30" height="17.10" fill="#f6e7c6" stroke="#f0d9a6" stroke-width="1.3"/>
<text x="677.80" y="681.90" font-size="11.8" font-weight="normal" fill="#b4ac9c" font-family='"Liberation Sans", sans-serif' textLength="34.70" lengthAdjust="spacingAndGlyphs"  xml:space="preserve">Select</text>
<path d="M866.80,674.75 L871.00,679.65 L875.20,674.75" fill="none" stroke="#b8b0a0" stroke-width="1.6" stroke-linecap="butt"/>
<rect x="886.9" y="668.70" width="109.2" height="17.2" fill="#fae3b0" stroke="#e9c06a" stroke-width="1.3"/>
<rect x="1011.5" y="670.60" width="13.3" height="13.3" rx="2.5" fill="#f2f2f2" stroke="#dedede" stroke-width="1"/>
</g>
<rect x="887.6" y="361.6" width="108" height="15.4" rx="3.2" fill="#fae3b0" stroke="#2f6bd6" stroke-width="2.1"/>
<rect x="892.2" y="364" width="1.1" height="11" fill="#222"/>
<rect x="1403.80" y="709.20" width="49.80" height="20.30" fill="#fae3b5" />
<path d="M1404.60,729.50 L1404.60,710.00 L1453.60,710.00" fill="none" stroke="#f0b030" stroke-width="1.8"/>
<path d="M1452.80,709.20 L1452.80,728.70 L1403.80,728.70" fill="none" stroke="#b58c32" stroke-width="1.8"/>
<text x="1414.20" y="724.40" font-size="11.8" font-weight="bold" fill="#111" font-family='"Liberation Sans", sans-serif' textLength="31.90" lengthAdjust="spacingAndGlyphs"  xml:space="preserve">Save</text>
<rect x="1459.50" y="709.20" width="61.80" height="20.60" fill="#fae3b5" />
<path d="M1460.30,729.80 L1460.30,710.00 L1521.30,710.00" fill="none" stroke="#f0b030" stroke-width="1.8"/>
<path d="M1520.50,709.20 L1520.50,729.00 L1459.50,729.00" fill="none" stroke="#b58c32" stroke-width="1.8"/>
<text x="1469.60" y="724.40" font-size="11.8" font-weight="bold" fill="#111" font-family='"Liberation Sans", sans-serif' textLength="43.40" lengthAdjust="spacingAndGlyphs"  xml:space="preserve">Cancel</text>
<clipPath id="vclip"><rect x="11.5" y="739" width="300" height="20"/></clipPath>
<text x="8.6" y="754" font-size="15.5" fill="#ffffff" font-family='"Liberation Serif", serif' clip-path="url(#vclip)" textLength="71" lengthAdjust="spacingAndGlyphs">GTD V8.8.0</text>
<rect x="874.4" y="352.5" width="159" height="36.4" rx="6" fill="none" stroke="#5418c4" stroke-width="2.1"/>
<rect x="1378.3" y="697.5" width="76.3" height="38.1" rx="6" fill="none" stroke="#5418c4" stroke-width="2.1"/></svg></body></html>
